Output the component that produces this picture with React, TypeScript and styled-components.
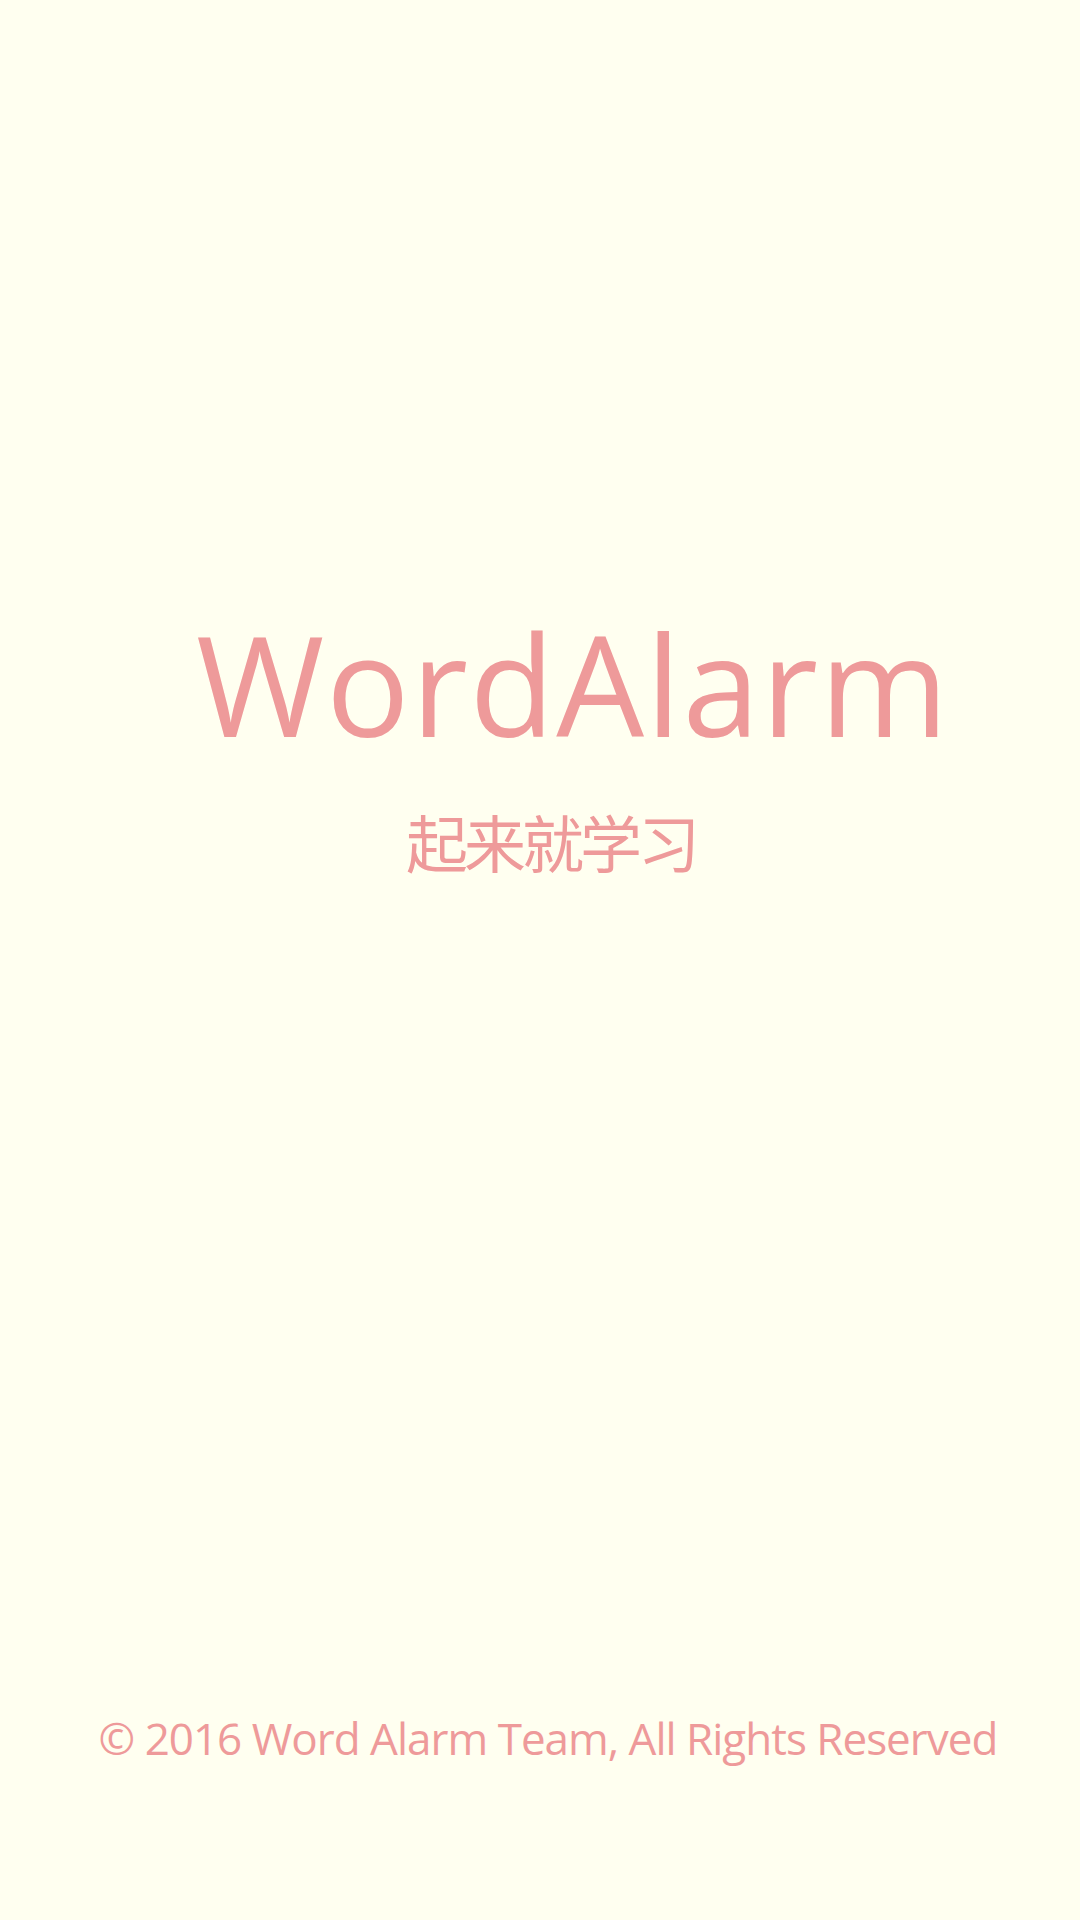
import React from "react";
import styled, { createGlobalStyle } from "styled-components";

const Global = createGlobalStyle`
  html, body { margin: 0; padding: 0; background: #fffff0; }
  #root { min-height: 1920px; }
`;

const Screen = styled.main`
  box-sizing: border-box;
  width: 1080px;
  height: 1920px;
  background: #fffff0;
  display: flex;
  flex-direction: column;
  align-items: center;
  padding: 614px 0 160px;
  color: #ee9a9a;
`;

const Title = styled.h1`
  margin: 0 0 0 66px;
  font-family: "Open Sans", "Noto Sans", sans-serif;
  font-weight: 400;
  font-size: 139px;
  letter-spacing: 1.6px;
  line-height: 1;
`;

const Slogan = styled.div`
  margin-top: 57px;
  margin-left: 22px;
  font-family: "Noto Sans CJK SC", sans-serif;
  font-weight: 400;
  font-size: 62px;
  letter-spacing: -4px;
  line-height: 1;
`;

const Spacer = styled.div`
  flex: 1;
`;

const Footer = styled.footer`
  margin-left: 16px;
  font-family: "Open Sans", "Noto Sans", sans-serif;
  font-size: 44px;
  letter-spacing: -1px;
  line-height: 1;
  white-space: nowrap;
`;

export default function App() {
  return (
    <>
      <Global />
      <Screen>
        <Title>WordAlarm</Title>
        <Slogan>起来就学习</Slogan>
        <Spacer />
        <Footer>© 2016 Word Alarm Team, All Rights Reserved</Footer>
      </Screen>
    </>
  );
}
